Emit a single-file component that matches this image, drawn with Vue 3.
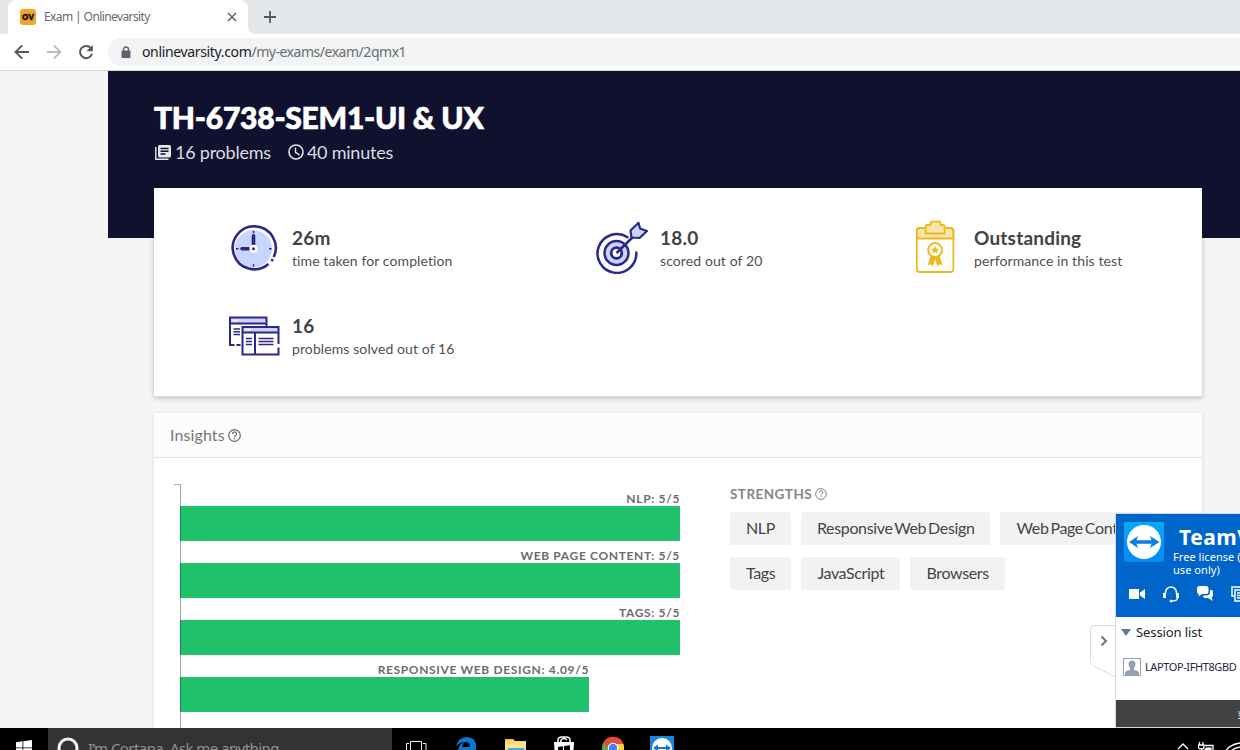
<script setup>
const bars = [
  { label: 'NLP: 5/5', score: 5 },
  { label: 'WEB PAGE CONTENT: 5/5', score: 5 },
  { label: 'TAGS: 5/5', score: 5 },
  { label: 'RESPONSIVE WEB DESIGN: 4.09/5', score: 4.09 },
]
const strengths = [
  ['NLP', 'Responsive Web Design', 'Web Page Content'],
  ['Tags', 'JavaScript', 'Browsers'],
]
</script>

<template>
  <div class="screen">
    <header class="tabs">
      <div class="tab">
        <span class="favicon">ov</span>
        <span class="tab-title">Exam | Onlinevarsity</span>
        <svg class="close" width="10" height="10" viewBox="0 0 10 10"><path d="M1 1l8 8M9 1l-8 8" stroke="#5f6368" stroke-width="1.5" /></svg>
      </div>
      <svg class="tab-foot" width="8" height="8" viewBox="0 0 8 8"><path d="M0 0Q0 8 8 8H0z" fill="#fff" /></svg>
      <svg class="plus" width="12" height="12" viewBox="0 0 12 12"><path d="M6 0v12M0 6h12" stroke="#53575b" stroke-width="1.8" /></svg>
    </header>
    <nav class="toolbar">
      <svg width="16" height="16" viewBox="0 0 16 16" fill="none" stroke="#54585c" stroke-width="1.9"><path d="M15 8H2M8.2 1.3L1.5 8l6.700 6.700" /></svg>
      <svg width="16" height="16" viewBox="0 0 16 16" fill="none" stroke="#babcbe" stroke-width="1.900"><path d="M1 8h13M7.800 1.300L14.500 8l-6.700 6.700" /></svg>
      <svg width="16" height="16" viewBox="0 0 16 16"><path d="M12.800 4.100A6.100 6.100 0 1 0 14 9.800" fill="none" stroke="#54585c" stroke-width="2" /><path d="M14.800 1v6.300H8.500z" fill="#54585c" /></svg>
      <div class="omnibox">
        <svg width="10" height="13" viewBox="0 0 10 13"><path d="M2.500 5V3.500a2.500 2.500 0 0 1 5 0V5" fill="none" stroke="#5f6368" stroke-width="1.400" /><rect x="0.500" y="4.500" width="9" height="7.500" rx="1" fill="#5f6368" /></svg>
        <span class="url"><b>onlinevarsity.com</b>/my-exams/exam/2qmx1</span>
      </div>
    </nav>

    <main class="page">
      <section class="banner">
        <h1>TH-6738-SEM1-UI &amp; UX</h1>
        <div class="meta">
          <svg width="16" height="15" viewBox="0 0 16 15"><path d="M.8 2v12.300H13.500" fill="none" stroke="#e6e6ea" stroke-width="1.400" /><rect x="3" y="0" width="13" height="12.500" rx="1.500" fill="#e6e6ea" /><path d="M5.500 3.500h8M5.500 6.300h8M5.500 9h5" stroke="#10112e" stroke-width="1.400" /></svg>
          <span class="problems">16 problems</span>
          <svg width="16" height="16" viewBox="0 0 16 16" fill="none" stroke="#e6e6ea" stroke-width="1.600"><circle cx="8" cy="8" r="7" /><path d="M7.500 3.500V8.300l4 2.500" stroke-width="1.400" /></svg>
          <span class="minutes">40 minutes</span>
        </div>
      </section>

      <section class="summary">
        <div class="stat">
          <svg width="52" height="54" viewBox="0 -0.8 52 54" fill="none"><circle cx="25.500" cy="28" r="18.500" fill="#c8d5ff" /><path d="M40.400 43.200A21.500 21.500 0 1 1 45.700 36.200M44.800 38.400l-1.200 2" stroke="#2d2787" stroke-width="2.600" /><path d="M25.500 26V15M22 28h-8" stroke="#2d2787" stroke-width="3.600" stroke-linecap="round" /><path d="M25.500 10v2.500M25.500 43.500V46M8 28h2.500M41 28h2.500" stroke="#2d2787" stroke-width="1.500" /><circle cx="25.500" cy="28" r="2.800" fill="#2d2787" stroke="#fff" stroke-width="2.600" /></svg>
          <div><strong>26m</strong><p>time taken for completion</p></div>
        </div>
        <div class="stat">
          <svg width="52" height="54" viewBox="0 0 52 54" fill="none" stroke="#2d2787" stroke-width="2.500" stroke-linejoin="round"><path d="M31.500 17.200A19.400 19.400 0 1 0 40.300 32.500" stroke-linecap="round" /><circle cx="20.500" cy="33" r="12" fill="#c8d5ff" /><circle cx="20.500" cy="33" r="5.300" fill="#fff" stroke-width="2.800" /><path d="M20.500 33L38 16" /><path d="M35.500 17.500L34.500 10.500 42.500 2.800 44 8.500 51 11 43.500 18z" fill="#c8d5ff" stroke-width="2.200" /><path d="M23 34q-.5 2-2.500 2" stroke="#fff" stroke-width="1" /></svg>
          <div><strong>18.0</strong><p>scored out of 20</p></div>
        </div>
        <div class="stat">
          <svg width="40" height="54" viewBox="0.4 0 40 54" fill="none" stroke="#eeb91e" stroke-width="1.800"><path d="M1.200 18.500V11q0-3 3-3h30.600q3 0 3 3v7.500z" fill="#f5e6ab" /><rect x="1.200" y="8" width="36.600" height="44" rx="3" /><path d="M10 13.500V6.500q0-1.500 1.500-1.500H15V3q0-1.300 1.300-1.300h7.400Q25 1.700 25 3v2h2.500Q29 5 29 6.500v7z" fill="#f5e6ab" /><path d="M15.500 34l-3.500 11.500 3.200-1.200 2 2.500 2.300-8 2.300 8 2-2.500 3.200 1.200-3.500-11.500z" fill="#eeb91e" stroke="none" /><circle cx="19.500" cy="30" r="6.900" fill="#fff" stroke-width="2" /><path d="M19.500 26l1.200 2.600 2.900.3-2.200 1.900.7 2.900-2.600-1.600-2.600 1.600.7-2.900-2.200-1.900 2.900-.3z" fill="#eeb91e" stroke="none" /></svg>
          <div><strong>Outstanding</strong><p>performance in this test</p></div>
        </div>
        <div class="stat">
          <svg width="52" height="54" viewBox="-0.500 -1 52 54" fill="none" stroke="#2d2787" stroke-width="2"><path d="M2 9h36v6H2z" fill="#c8d5ff" stroke="none" /><path d="M12 36H8M6 36H1.500V8.500H38V18M1.500 14.500H38" /><path d="M5 20h6.500M5 22.700h6.500M5 25.400h6.500" stroke-width="1.500" /><rect x="14" y="18" width="36" height="27.500" fill="#fff" stroke="none" /><path d="M14 18h36v5.500H14z" fill="#c8d5ff" stroke="none" /><path d="M50 35V18H14v27.500h36V38.500M14 23.500h36M26.500 23.500v22" /><path d="M17.500 29.500h6M17.500 32.500h6M17.500 35.500h6M30 29.500h15M30 32.500h15M30 35.500h15" stroke-width="1.400" /><path d="M4 11.500h6M16.500 20.500h6" stroke="#fff" stroke-width="1.500" stroke-dasharray="1.500 .7" /></svg>
          <div><strong>16</strong><p>problems solved out of 16</p></div>
        </div>
      </section>

      <section class="insights">
        <div class="insights-head"><span>Insights</span><svg width="13" height="13" viewBox="0 0 13 13" fill="none" stroke="#696969" stroke-width="1.200"><circle cx="6.500" cy="6.500" r="5.800" /><path d="M4.500 5a2 2 0 1 1 3 1.700Q6.500 7.200 6.500 8.200M6.500 9v1.200" /></svg></div>
        <div class="insights-body">
          <div class="chart">
            <div v-for="bar in bars" :key="bar.label" class="row" :style="{ width: bar.score * 100 + 'px' }">
              <span class="bar-label">{{ bar.label }}</span>
              <div class="bar"></div>
            </div>
          </div>
          <div class="strengths">
            <h2><span>STRENGTHS</span><svg width="12" height="12" viewBox="0 0 13 13" fill="none" stroke="#777" stroke-width="1"><circle cx="6.500" cy="6.500" r="5.800" /><path d="M4.500 5a2 2 0 1 1 3 1.700Q6.500 7.200 6.500 8.200M6.500 9v1.200" /></svg></h2>
            <div v-for="(line, i) in strengths" :key="i" class="chips">
              <span v-for="s in line" :key="s" class="chip">{{ s }}</span>
            </div>
          </div>
        </div>
      </section>
    </main>

    <svg class="handle" width="26" height="54" viewBox="0 0 26 54"><path d="M26 .5H5Q.5.500.5 5v30q0 4 3.500 6L26 52.500" fill="#fff" stroke="#d4d9df" /><path d="M11.500 11.500l4.500 4.500-4.500 4.500" fill="none" stroke="#5d7a94" stroke-width="2" /></svg>
    <aside class="viewer">
      <div class="viewer-head">
        <div class="brand">
          <svg width="40" height="40" viewBox="0 0 40 40"><defs><linearGradient id="tv" x2="0" y2="1"><stop stop-color="#08aaf5" /><stop offset="1" stop-color="#008bf5" /></linearGradient></defs><rect width="40" height="40" rx="1.500" fill="url(#tv)" /><circle cx="20" cy="20" r="17" fill="#fff" /><path d="M5 20l9-6-1.500 4.300h15L26 14l9.500 6-9.500 6 1.500-4.300h-15L14 26z" fill="#087de2" /></svg>
          <div class="brand-text"><strong>TeamViewer</strong><p>Free license (non-commercial</p><p>use only)</p></div>
        </div>
        <div class="tools">
          <svg width="18" height="18" viewBox="0 0 18 18" fill="#fff"><path d="M1 4h10v10H1zM12 7.500L17 4v10l-5-3.500z" /></svg>
          <svg width="18" height="18" viewBox="0 0 18 18" fill="none" stroke="#fff"><path d="M3.500 9V7.500a5.500 5.500 0 0 1 11 0V9" stroke-width="1.500" /><path d="M2.500 8v5M15.500 8v5" stroke-width="3" /><path d="M15.500 13q0 3-5.500 3" stroke-width="1.300" /><circle cx="9" cy="16" r="1" fill="#fff" /></svg>
          <svg width="18" height="18" viewBox="0 0 18 18" fill="#fff"><path d="M3 1h7q2.500 0 2.500 2.500v3Q12.500 9 10 9H6l-4 2.500L3 9Q1 9 1 6.500v-3Q1 1 3 1z" /><path d="M14 5h1.500Q17 5 17 7v3q0 2-1.500 2.200L17 16l-5-3H9Q7 13 7 10.500h4Q14 10 14 7z" /></svg>
          <svg width="18" height="18" viewBox="0 0 18 18" fill="none" stroke="#fff" stroke-width="1.500"><path d="M4 11H2V2h10v2" /><path d="M5 5h10v11H5zM7 8h6M7 10.500h6M7 13h6" /></svg>
        </div>
      </div>
      <div class="session"><svg width="10" height="7" viewBox="0 0 10 7"><path d="M0 0h10L5 7z" fill="#5f7b97" /></svg><span>Session list</span></div>
      <div class="computer">
        <svg width="18" height="18" viewBox="0 0 18 18"><rect x=".5" y=".5" width="17" height="17" fill="#fff" stroke="#94a3b4" /><path d="M2 17v-2q0-2 5-3V10Q5.500 8.500 5.500 6q0-3.500 3.500-3.500T12.500 6q0 2.500-1.500 4v2q5 1 5 3v2z" fill="#94a3b4" /></svg>
        <span>LAPTOP-IFHT8GBD</span>
      </div>
      <div class="viewer-foot"><u>www.teamviewer.com</u></div>
    </aside>

    <footer class="taskbar">
      <div class="start"><svg width="16" height="16" viewBox="0 0 16 16"><path d="M0 2.200L6.500 1.300v6.200H0zM7.300 1.200L16 0v7.500H7.300zM0 8.300h6.500v6.200L0 13.600zM7.300 8.300H16V16l-8.700-1.200z" fill="#fff" /></svg></div>
      <div class="cortana"><svg width="22" height="22" viewBox="0 0 22 22"><circle cx="11" cy="11" r="9" fill="none" stroke="#f2f2f2" stroke-width="3" /></svg><span>I’m Cortana. Ask me anything.</span></div>
      <div class="apps">
        <svg class="taskview" width="21" height="16" viewBox="0 0 21 16" fill="none" stroke="#eee"><path d="M4.500.5h11v15h-11zM3 2.500H.5v11H3M17 2.500h3v11h-3" /></svg>
        <svg width="24" height="24" viewBox="0 0 24 24"><path d="M2 11Q4 1 13 1q9 0 9 10v3H8q1 7 12 3v5Q5 27 4 14q1-6 7-8Q5 6 2 11M8 11h8q0-5-4-5-3 0-4 5z" fill="#0b78d7" fill-rule="evenodd" /></svg>
        <svg width="24" height="24" viewBox="0 0 24 24"><path d="M2 3h8l2 2h11v18H2z" fill="#f6d779" /><path d="M2 4h8" stroke="#e4b94a" /><path d="M5 12h16v9H5z" fill="#39aee4" /><path d="M12 6h11v6H2V8h10z" fill="#ffe08c" /></svg>
        <svg width="24" height="24" viewBox="0 0 24 24"><path d="M6 8V4q0-3 4-3h4q4 0 4 3v4M9 8V4q3-3 6 0" fill="none" stroke="#fff" stroke-width="1.500" /><path d="M2 6h20l-1 17H3z" fill="#fff" /><path d="M6 11l5-.7v5H6zM12 10l6-.8v6h-6z" fill="#000" /></svg>
        <svg width="24" height="24" viewBox="0 0 24 24"><circle cx="12" cy="12" r="11" fill="#4caf50" /><path d="M2.500 6.500A11 11 0 0 1 22.500 8H12L8 15z" fill="#e84a3c" /><path d="M12 8h10.300A11 11 0 0 1 12 23l4-9z" fill="#ffce42" /><circle cx="12" cy="12" r="5.300" fill="#fff" /><circle cx="12" cy="12" r="4.200" fill="#4285f4" /></svg>
        <svg width="24" height="24" viewBox="0 0 24 24"><rect width="24" height="24" fill="#1787e0" /><circle cx="12" cy="12" r="10" fill="#fff" /><path d="M3 12l5-3.500v2.500h8V8.500l5 3.500-5 3.500V13H8v2.500z" fill="#1278d4" /></svg>
      </div>
      <div class="tray">
        <svg width="12" height="8" viewBox="0 0 12 8" fill="none" stroke="#fff" stroke-width="1.400"><path d="M1 7l5-5 5 5" /></svg>
        <svg width="16" height="16" viewBox="0 0 16 16" fill="none" stroke="#fff" stroke-width="1.300"><path d="M1.500 0v3M5 0v3M.5 3h5.500v2q0 2-2.800 2T.5 5zM3.500 7v5M7 3.500h8V13H5" /><path d="M8 5.500h5.500V12H6V8z" fill="#fff" stroke="none" /></svg>
        <svg width="18" height="18" viewBox="0 0 18 18" fill="none" stroke="#fff" stroke-width="1.300"><path d="M1 14Q3 3 17 1M5 15Q6 7 17 5M9 16q1-6 8-7" /></svg>
      </div>
    </footer>
  </div>
</template>

<style>
body { margin: 0; }
</style>

<style scoped>
*, *::before { box-sizing: border-box; }
svg { flex: none; display: block; }
h1, h2, p { margin: 0; }
.screen { position: relative; width: 1240px; height: 750px; overflow: hidden; display: flex; flex-direction: column; background: #f5f5f5; font-family: Lato, sans-serif; white-space: nowrap; }
.tabs { height: 34px; flex: none; background: #e5e8ea; display: flex; align-items: center; }
.tab { align-self: stretch; width: 240px; margin-left: 8px; background: #fff; border-radius: 8px 8px 0 0; display: flex; align-items: center; padding: 0 11px 0 12px; }
.favicon { width: 16px; height: 16px; border-radius: 3px; background: #f2a62b; font: 900 11px/14px Lato, sans-serif; color: #19130a; text-align: center; -webkit-text-stroke: .4px #19130a; }
.tab-title { margin-left: 8px; font: 12px/16px "Noto Sans", sans-serif; color: #66696d; letter-spacing: -0.6px; }
.close { margin-left: auto; }
.tab-foot { align-self: flex-end; }
.plus { margin-left: 8px; }
.toolbar { height: 37px; flex: none; background: #fff; border-bottom: 1px solid #d6d8da; display: flex; align-items: center; padding-left: 14px; gap: 16px; }
.omnibox { margin-left: -2px; flex: 1; height: 28px; border-radius: 14px 0 0 14px; background: #f1f3f4; display: flex; align-items: center; padding-left: 13px; }
.url { margin-left: 11px; font: 14px/20px "Noto Sans", sans-serif; letter-spacing: -0.47px; color: #6a6d71; }
.url b { font-weight: 400; letter-spacing: -.35px; color: #202124; }
.page { margin-left: 108px; height: 657px; flex: none; background: #f5f5f5; overflow: hidden; }
.banner { height: 167px; background: #10112e; padding: 28px 0 0 46px; color: #fff; }
.banner h1 { font: 900 30px/36px Lato, sans-serif; letter-spacing: -0.25px; -webkit-text-stroke: .7px #fff; }
.meta { display: flex; align-items: center; height: 24px; margin-top: 5px; padding-left: 1px; font-size: 18px; letter-spacing: -.23px; color: #dcdce2; }
.problems { margin: 0 17px 0 4px; }
.minutes { margin-left: 3px; }
.summary { position: relative; width: 1048px; height: 209px; margin: -50px 0 0 46px; background: #fff; border-bottom: 1px solid #ddd; box-shadow: 0 1px 5px rgba(0,0,0,.25); display: grid; grid-template-columns: 368px 318px 1fr; grid-template-rows: 88px 88px; padding: 32px 0 0 74px; }
.stat { display: flex; align-items: flex-start; gap: 12px; }
.stat:nth-child(3) { gap: 18px; padding-left: 2px; }
.stat strong { display: block; margin-top: 6px; font: 700 19px/24px Lato, sans-serif; letter-spacing: .2px; color: #424247; }
.stat p { font-size: 14px; line-height: 20px; margin-top: 1px; color: #505050; letter-spacing: .1px; }
.insights { margin: 16px 0 0 46px; width: 1048px; height: 360px; background: #fff; box-shadow: 0 1px 4px rgba(0,0,0,.12); }
.insights-head { height: 45px; border-bottom: 1px solid #e2e2e2; background: #fcfcfc; display: flex; align-items: center; gap: 3px; padding-left: 16px; font-size: 16px; letter-spacing: .1px; color: #777; }
.insights-head span { padding-bottom: 2px; }
.insights-body { display: flex; padding: 26px 0 0 20px; }
.chart { position: relative; width: 556px; height: 260px; padding: 6px 0 0 6px; }
.chart::before { content: ""; position: absolute; left: 0; top: 0; width: 7px; height: 260px; border-top: 1px solid #aaa; border-right: 1px solid #aaa; }
.row { height: 57px; text-align: right; }
.bar-label { display: block; height: 16px; font: 700 12px/18px Lato, sans-serif; letter-spacing: .65px; color: #6c6c6c; }
.bar { position: relative; height: 35px; background: #1fc26b; border-left: 1px solid #158849; }
.strengths h2 { display: flex; align-items: center; gap: 3px; height: 20px; font-size: 13.500px; font-weight: 700; color: #858585; letter-spacing: .45px; }
.chips { display: flex; gap: 10px; margin-top: 8px; margin-bottom: 12px; }
.chip { height: 33px; padding: 0 16px; border-radius: 2px; background: #f2f2f2; font-size: 16px; letter-spacing: -.36px; word-spacing: -1.8px; line-height: 32px; color: #454545; }
.handle { position: absolute; left: 1090px; top: 625px; }
.viewer { position: absolute; left: 1115px; top: 513px; width: 240px; height: 215px; border: 1px solid #cfd9e4; background: #fff; display: flex; flex-direction: column; font-family: "DejaVu Sans", sans-serif; }
.viewer-head { height: 103px; background: #0065cb; padding: 8px; color: #fff; }
.brand { display: flex; gap: 9px; height: 63px; }
.brand-text strong { display: block; padding: 3px 0 0 6px; font: 700 21px/25px "Noto Sans", sans-serif; letter-spacing: .5px; }
.brand-text p { font: 11px/13px "Noto Sans", sans-serif; letter-spacing: .05px; }
.tools { display: flex; gap: 16px; padding-left: 4px; }
.session { height: 31px; display: flex; align-items: center; gap: 5px; padding-left: 5px; font: 13px/18px "Noto Sans", sans-serif; letter-spacing: -.1px; color: #222; }
.session span { padding-bottom: 2px; }
.computer { height: 38px; display: flex; align-items: center; gap: 4px; padding-left: 7px; font: 11px/18px "Noto Sans", sans-serif; letter-spacing: -.4px; color: #222842; }
.viewer-foot { margin-top: auto; height: 27px; background: #424242; color: #b5d6f4; font: 11px/25px "Noto Sans", sans-serif; padding-left: 122px; }
.taskbar { position: relative; height: 22px; flex: none; background: #000; display: flex; overflow: hidden; }
.start { width: 48px; padding: 12px 0 0 16px; }
.cortana { width: 344px; background: #333; display: flex; gap: 9px; padding: 9px 0 0 9px; font: 15px/22px "Noto Sans", sans-serif; color: #929292; }
.cortana span { letter-spacing: -.57px; }
.apps { display: flex; gap: 25px; padding: 8px 0 0 14px; }
.taskview { margin: 5px 2px 0 0; }
.tray { display: flex; gap: 9px; margin-left: auto; padding: 14px 0 0; width: 63px; }
</style>
